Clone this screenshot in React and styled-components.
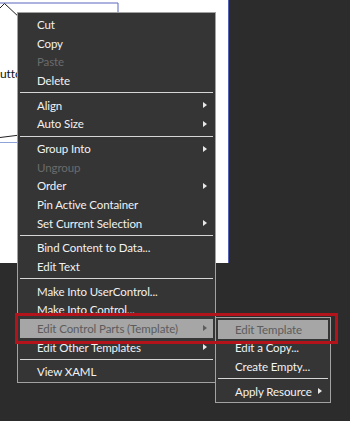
import React from 'react';
import styled, { createGlobalStyle } from 'styled-components';

const Global = createGlobalStyle`
  html, body {
    margin: 0;
    padding: 0;
    background: #2c2c2c;
  }
`;

const Page = styled.div`
  position: relative;
  width: 350px;
  height: 421px;
  overflow: hidden;
  background: #2c2c2c;
  font-family: Lato, "Open Sans", sans-serif;
  font-size: 11.5px;
  letter-spacing: -0.1px;
`;

const Artboard = styled.div`
  position: relative;
  width: 228px;
  height: 263px;
  background: #ffffff;
  border-right: 1px solid #5561b4;
  overflow: hidden;
`;

const Sketch = styled.svg`
  position: absolute;
  left: 0;
  top: 0;
`;

/* a button on the canvas, mostly hidden under the context menu */
const ButtonLabel = styled.span`
  position: absolute;
  left: 0;
  top: 66px;
  color: #111;
  font-size: 12px;
`;

const Menu = styled.div`
  position: absolute;
  left: ${(p) => p.$left}px;
  top: ${(p) => p.$top}px;
  width: ${(p) => p.$width}px;
  box-sizing: border-box;
  background: #353535;
  border: 1px solid #a2a2a2;
  padding: 2.5px 2px 1px;
  display: flex;
  flex-direction: column;
`;

const Item = styled.div`
  display: flex;
  align-items: center;
  height: 18.6px;
  padding-left: 17px;
  padding-right: 6px;
  color: ${(p) => (p.$disabled ? '#6b6b6b' : p.$active ? '#5c5c5c' : '#f2f2f2')};
  background: ${(p) => (p.$active ? '#a6a6a6' : 'transparent')};
  white-space: nowrap;
`;

const Label = styled.span`
  flex: 1;
`;

const Separator = styled.div`
  height: 1px;
  margin: 2.6px 0;
  background: #d6d6d6;
`;

const Arrow = styled.span`
  width: 0;
  height: 0;
  margin-left: 6px;
  border-top: 3.5px solid transparent;
  border-bottom: 3.5px solid transparent;
  border-left: 4px solid ${(p) => (p.$active ? '#5c5c5c' : '#e8e8e8')};
`;

const Callout = styled.div`
  position: absolute;
  left: 15px;
  top: 313px;
  width: 323px;
  height: 31px;
  box-sizing: border-box;
  border: 3px solid #b3141b;
  pointer-events: none;
`;

const mainItems = [
  { label: 'Cut' },
  { label: 'Copy' },
  { label: 'Paste', disabled: true },
  { label: 'Delete' },
  'sep',
  { label: 'Align', sub: true },
  { label: 'Auto Size', sub: true },
  'sep',
  { label: 'Group Into', sub: true },
  { label: 'Ungroup', disabled: true },
  { label: 'Order', sub: true },
  { label: 'Pin Active Container' },
  { label: 'Set Current Selection', sub: true },
  'sep',
  { label: 'Bind Content to Data...' },
  { label: 'Edit Text' },
  'sep',
  { label: 'Make Into UserControl...' },
  { label: 'Make Into Control...' },
  { label: 'Edit Control Parts (Template)', sub: true, active: true },
  { label: 'Edit Other Templates', sub: true },
  'sep',
  { label: 'View XAML' },
];

const subItems = [
  { label: 'Edit Template', active: true },
  { label: 'Edit a Copy...' },
  { label: 'Create Empty...' },
  'sep',
  { label: 'Apply Resource', sub: true },
];

const MenuList = ({ items, ...rest }) => (
  <Menu {...rest}>
    {items.map((it, i) =>
      it === 'sep' ? (
        <Separator key={i} />
      ) : (
        <Item key={i} $disabled={it.disabled} $active={it.active}>
          <Label>{it.label}</Label>
          {it.sub && <Arrow $active={it.active} />}
        </Item>
      )
    )}
  </Menu>
);

export default function App() {
  return (
    <Page>
      <Global />
      <Artboard>
        <Sketch width="228" height="263">
          <polyline points="0,3 118,3 118,20" fill="none" stroke="#5b67bd" strokeWidth="1" />
          <polyline points="0,8 4.5,3.5 20,18" fill="none" stroke="#222" strokeWidth="1" />
          <line x1="0" y1="137.5" x2="20" y2="135" stroke="#222" strokeWidth="1" />
          <line x1="0" y1="142.5" x2="20" y2="142.5" stroke="#8fa4d6" strokeWidth="1" />
        </Sketch>
        <ButtonLabel>utto</ButtonLabel>
      </Artboard>
      <MenuList items={mainItems} $left={17} $top={12} $width={199} />
      <MenuList items={subItems} $left={215} $top={316.5} $width={116} />
      <Callout />
    </Page>
  );
}
